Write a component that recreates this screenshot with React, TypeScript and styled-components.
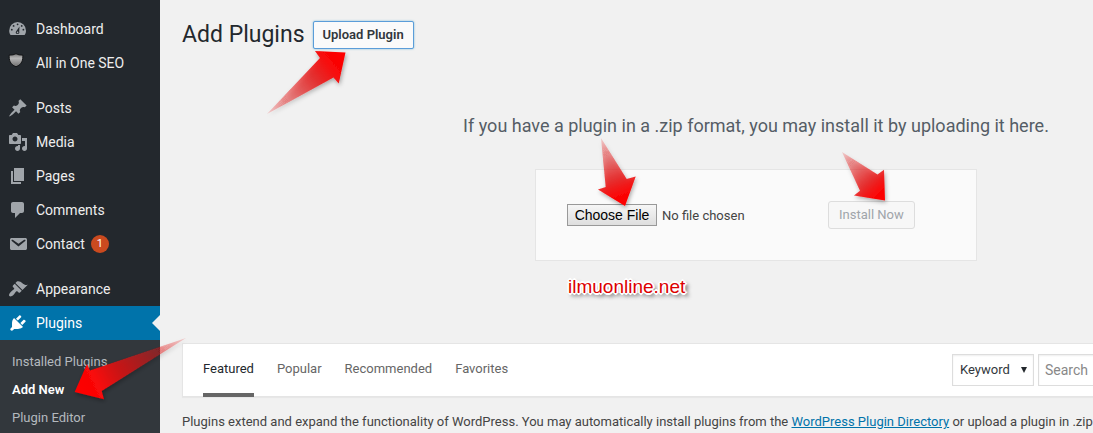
import React from "react";
import styled, { createGlobalStyle, css } from "styled-components";

const uiFont = `"Segoe UI", Roboto, "Open Sans", sans-serif`;

const GlobalStyle = createGlobalStyle`
  *, *::before, *::after { box-sizing: border-box; }
  body {
    margin: 0;
    background: #f1f1f1;
    color: #444;
    font-family: ${uiFont};
    font-size: 13px;
    line-height: 18px;
  }
  button, input, select { font: inherit; }
`;

const Page = styled.div`
  position: relative;
  display: flex;
  min-height: 100vh;
  overflow: hidden;
`;

/* ---------- Admin menu ---------- */

const Sidebar = styled.nav`
  display: flex;
  flex-direction: column;
  flex: 0 0 160px;
  padding-top: 12px;
  background: #23282d;
`;

const MenuList = styled.ul`
  margin: 0 0 11px;
  padding: 0;
  list-style: none;

  &:last-of-type {
    display: flex;
    flex-direction: column;
    flex: 1;
    margin: 0;
  }
`;

const MenuLink = styled.a<{ $current?: boolean }>`
  position: relative;
  display: flex;
  align-items: center;
  gap: 8px;
  height: 34px;
  padding-left: 8px;
  color: ${(p) => (p.$current ? "#fff" : "#eee")};
  background: ${(p) => (p.$current ? "#0073aa" : "transparent")};
  font-size: 14px;
  text-decoration: none;

  svg {
    flex: none;
    fill: ${(p) => (p.$current ? "#fff" : "#a0a5aa")};
  }

  ${(p) =>
    p.$current &&
    css`
      &::after {
        content: "";
        position: absolute;
        right: 0;
        top: 9px;
        border: 8px solid transparent;
        border-left-width: 0;
        border-right-color: #f1f1f1;
      }
    `}
`;

const Badge = styled.span`
  width: 18px;
  height: 18px;
  margin-left: -2px;
  border-radius: 9px;
  background: #ca4a1f;
  color: #fff;
  font-size: 11px;
  line-height: 18px;
  text-align: center;
`;

const Submenu = styled.ul`
  margin: 0;
  padding: 8px 0 0;
  list-style: none;
  background: #32373c;
`;

const SubmenuItem = styled.li`
  flex: 1;
  background: #32373c;
`;

const SubmenuLink = styled.a<{ $current?: boolean }>`
  display: block;
  padding: 5px 12px;
  color: ${(p) => (p.$current ? "#fff" : "#b4b9be")};
  font-size: 13px;
  font-weight: ${(p) => (p.$current ? 600 : 400)};
  text-decoration: none;
`;

const iconPaths = {
  dashboard:
    "M2.6 16C1.600 14.700 1.200 13.200 1.200 11.700A8.400 8.700 0 0 1 18 11.700C18 13.200 17.600 14.700 16.600 16zM9.600 4.400a.9.9 0 1 0 0 1.800.9.9 0 1 0 0-1.800zM5.600 6a.9.9 0 1 0 0 1.800.9.9 0 1 0 0-1.800zM13.700 6a.9.9 0 1 0 0 1.800.9.9 0 1 0 0-1.800zM3.800 9.800a.9.9 0 1 0 0 1.800.9.9 0 1 0 0-1.800zM15.400 9.800a.9.9 0 1 0 0 1.800.9.9 0 1 0 0-1.800zM11.500 7.600L8.400 11.900C7.200 12.900 7.600 15 9.500 15.100C11.300 15 11.700 13.500 11.200 12.500zM9.600 12.600a.8.8 0 1 1 0 1.600.8.8 0 1 1 0-1.600z",
  posts:
    "M10.44 3.02l1.82-1.82 6.36 6.35-1.83 1.82c-1.05-.68-2.48-.57-3.41.36l-.75.75c-.92.93-1.04 2.35-.35 3.41l-1.83 1.82-2.41-2.41-2.8 2.79c-.42.42-3.38 2.71-3.8 2.29s1.86-3.39 2.28-3.81l2.79-2.79L4.1 9.36l1.83-1.82c1.05.69 2.48.57 3.4-.36l.75-.75c.93-.92 1.05-2.35.36-3.41z",
  media:
    "M13 11V4c0-.55-.45-1-1-1h-1.67L9 1H5L3.67 3H2c-.55 0-1 .45-1 1v7c0 .55.45 1 1 1h10c.55 0 1-.45 1-1zM7 4.5c1.38 0 2.5 1.12 2.5 2.5S8.38 9.5 7 9.5 4.5 8.38 4.5 7 5.62 4.5 7 4.5zM14 6h5v10.5c0 1.38-1.12 2.5-2.5 2.5S14 17.88 14 16.5s1.12-2.5 2.5-2.5c.17 0 .34.02.5.05V9h-3V6zm-4 8.05V13h2v3.5c0 1.38-1.12 2.5-2.5 2.5S7 17.88 7 16.5 8.12 14 9.5 14c.17 0 .34.02.5.05z",
  pages: "M6 15V2h10v13H6zm-1 1h8v2H3V5h2v11z",
  comments:
    "M5 2h9c1.1 0 2 .9 2 2v7c0 1.1-.9 2-2 2h-2l-5 5v-5H5c-1.1 0-2-.9-2-2V4c0-1.1.9-2 2-2z",
  contact:
    "M3.87 4h13.25C18.37 4 19 4.59 19 5.79v8.42c0 1.19-.63 1.79-1.88 1.79H3.87c-1.25 0-1.88-.6-1.88-1.79V5.79c0-1.2.63-1.79 1.88-1.79zm6.62 8.6l6.74-5.53c.24-.2.43-.66.13-1.07-.29-.41-.82-.42-1.17-.17l-5.7 3.86L4.8 5.83c-.35-.25-.88-.24-1.17.17-.3.41-.11.87.13 1.07z",
  appearance:
    "M14.48 11.06L7.41 3.99l1.5-1.5c.5-.56 2.3-.47 3.51.32 1.21.8 1.43 1.28 2.91 2.1 1.18.64 2.45 1.26 4.45.85zm-.71.71L6.7 4.7 4.93 6.47c-.39.39-.39 1.02 0 1.41l1.06 1.06c.39.39.39 1.03 0 1.42-.6.6-1.43 1.11-2.21 1.69-.35.26-.7.53-1.01.84C1.43 14.23.4 16.08 1.4 17.07c.99 1 2.84-.03 4.18-1.36.31-.31.58-.66.85-1.02.57-.78 1.08-1.61 1.69-2.21.39-.39 1.02-.39 1.41 0l1.06 1.06c.39.39 1.02.39 1.41 0z",
  plugins:
    "M13.11 4.36L9.87 7.6 8 5.73l3.24-3.24c.35-.34 1.05-.2 1.56.32.52.51.66 1.21.31 1.55zm-8 1.77l.91-1.12 9.01 9.01-1.19.84c-.71.71-2.63 1.16-3.82 1.16H6.14L4.9 17.26c-.59.59-1.54.59-2.12 0-.59-.58-.59-1.53 0-2.12l1.24-1.24v-3.88c0-1.13.4-3.19 1.09-3.89zm7.26 3.97l3.24-3.24c.34-.35 1.04-.21 1.55.31.52.51.66 1.21.31 1.55l-3.24 3.25z",
};

type IconName = keyof typeof iconPaths;

const MenuIcon = ({ name }: { name: IconName }) => (
  <svg width="20" height="20" viewBox="0 0 20 20" aria-hidden="true">
    <path fillRule="evenodd" d={iconPaths[name]} />
  </svg>
);

const ShieldIcon = () => (
  <svg width="20" height="20" viewBox="0 0 20 20" aria-hidden="true">
    <defs>
      <linearGradient id="shield" x1="0" y1="0" x2="0" y2="1">
        <stop offset="0" stopColor="#777" />
        <stop offset="0.35" stopColor="#b4b4b4" />
        <stop offset="1" stopColor="#6e6e6e" />
      </linearGradient>
    </defs>
    <path
      d="M8 .7C9.8 1.8 12 2.1 14.8 2c.3 4.8-.6 9.3-6.8 11.8C1.8 11.3.9 6.8 1.2 2 4 2.1 6.2 1.800 8 .7z"
      fill="url(#shield)"
      stroke="#121416"
      strokeWidth="1"
    />
  </svg>
);

/* ---------- Main column ---------- */

const Main = styled.main`
  flex: 1;
  min-width: 0;
  padding: 21px 0 0 22px;
`;

const Wrap = styled.div`
  min-width: 1148px;
`;

const TitleRow = styled.header`
  display: flex;
  align-items: center;
  gap: 8px;
  height: 28px;
`;

const Title = styled.h1`
  margin: 0;
  font-size: 23px;
  font-weight: 400;
  line-height: 28px;
  color: #23282d;
`;

const Button = styled.button`
  padding: 0 10px;
  height: 28px;
  border: 1px solid #ddd;
  border-radius: 3px;
  background: #f7f7f7;
  font-size: 13px;
  line-height: 16px;

  &:disabled {
    color: #a0a5aa;
  }
`;

const UploadButton = styled(Button)`
  padding: 0 9px;
  border-color: #5b9dd9;
  border-radius: 2px;
  background: #fafafa;
  box-shadow: 0 0 2px rgba(30, 140, 190, 0.6);
  color: #32373c;
  font-weight: 600;
`;

const UploadSection = styled.section`
  display: flex;
  flex-direction: column;
  align-items: center;
  padding: 63px 0 82px;
`;

const Help = styled.p`
  margin: 0;
  color: #555d66;
  font-size: 18px;
  line-height: 27px;
`;

const UploadForm = styled.form`
  display: flex;
  align-items: center;
  width: 442px;
  height: 92px;
  margin-top: 30px;
  padding: 0 31px;
  border: 1px solid #e5e5e5;
  background: #fafafa;
`;

const FileInput = styled.input`
  width: 261px;
  color: #444;
  font-size: 13px;

  &::file-selector-button {
    width: 90px;
    height: 22px;
    margin: 0 5px 0 0;
    padding: 0;
    border: 1px solid #999;
    border-radius: 0;
    background: linear-gradient(#f6f6f6, #dedede);
    color: #000;
    font: 14px "Liberation Sans", Arial, sans-serif;
  }
`;

const FilterBar = styled.div`
  display: flex;
  justify-content: space-between;
  align-items: stretch;
  height: 54px;
  padding: 0 10px 0 20px;
  border: 1px solid #e5e5e5;
  background: #fff;
  box-shadow: 0 1px 1px rgba(0, 0, 0, 0.04);
`;

const Tabs = styled.ul`
  display: flex;
  gap: 23px;
  margin: 0;
  padding: 0;
  list-style: none;
`;

const Tab = styled.a<{ $current?: boolean }>`
  display: block;
  height: 53px;
  padding-top: 16px;
  border-bottom: 4px solid ${(p) => (p.$current ? "#666" : "transparent")};
  color: ${(p) => (p.$current ? "#23282d" : "#666")};
  font-size: 13px;
  text-decoration: none;
`;

const SearchForm = styled.form`
  display: flex;
  align-items: center;
  gap: 4px;
`;

const SelectBox = styled.span`
  position: relative;
  display: flex;

  svg {
    position: absolute;
    right: 6px;
    top: 12px;
    pointer-events: none;
  }
`;

const Select = styled.select`
  appearance: none;
  width: 82px;
  height: 32px;
  padding: 0 7px;
  border: 1px solid #ddd;
  border-radius: 0;
  background: #fff;
  box-shadow: inset 0 1px 2px rgba(0, 0, 0, 0.07);
  color: #32373c;
`;

const SearchInput = styled.input`
  width: 281px;
  height: 32px;
  padding: 0 6px;
  border: 1px solid #ddd;
  background: #fff;
  box-shadow: inset 0 1px 2px rgba(0, 0, 0, 0.07);
  font-size: 14px;

  &::placeholder {
    color: #888;
  }
`;

const Intro = styled.p`
  margin: 16px 0 0;
  font-size: 13px;
  white-space: nowrap;

  a {
    color: #0073aa;
  }
`;

/* ---------- Tutorial annotations ---------- */

const Annotation = styled.svg`
  position: absolute;
  top: 0;
  left: 0;
  overflow: visible;
  pointer-events: none;
`;

const Watermark = styled.span`
  position: absolute;
  top: 276px;
  left: 568px;
  color: #dc0000;
  font: 19px/22px "Liberation Sans", Arial, sans-serif;
  text-shadow:
    2px 0 #fff,
    -2px 0 #fff,
    0 2px #fff,
    0 -2px #fff,
    1px 1px #fff,
    -1px -1px #fff,
    -1px 1px #fff,
    1px -1px #fff,
    3px 3px 4px rgba(0, 0, 0, 0.9);
`;

const arrows = [
  { id: "to-upload", tail: [267, 114], tip: [345, 52], points: "267,114 320,58 315,51 345.5,52.5 338.7,83.5 333.5,77.5" },
  { id: "to-file", tail: [601, 138], tip: [625, 206], points: "601,138 605.7,187 598,189.5 625,206 635.7,176.5 626.7,179" },
  { id: "to-install", tail: [842, 152], tip: [885, 201], points: "842,152 860,190.7 854,195.5 885,200.5 884,169.7 877.5,174.5" },
  { id: "to-add-new", tail: [186, 338], tip: [75, 392], points: "186,338 90,370.5 87,364 74.7,392 104,399.3 101.7,391" },
];

const Arrows = () => (
  <Annotation width="1" height="1" aria-hidden="true">
    <defs>
      <filter id="arrow-shadow" x="-20%" y="-20%" width="150%" height="150%">
        <feDropShadow dx="1" dy="2" stdDeviation="2" floodOpacity="0.35" />
      </filter>
      {arrows.map(({ id, tail, tip }) => (
        <linearGradient
          key={id}
          id={id}
          gradientUnits="userSpaceOnUse"
          x1={tail[0]}
          y1={tail[1]}
          x2={tip[0]}
          y2={tip[1]}
        >
          <stop offset="0" stopColor="#e81010" stopOpacity="0.15" />
          <stop offset="0.6" stopColor="#e81010" stopOpacity="0.8" />
          <stop offset="0.8" stopColor="#f80808" />
          <stop offset="1" stopColor="#ff0000" />
        </linearGradient>
      ))}
    </defs>
    {arrows.map(({ id, points }) => (
      <polygon key={id} points={points} fill={`url(#${id})`} filter="url(#arrow-shadow)" />
    ))}
  </Annotation>
);

const contentMenu: { icon: IconName; label: string; count?: number }[] = [
  { icon: "posts", label: "Posts" },
  { icon: "media", label: "Media" },
  { icon: "pages", label: "Pages" },
  { icon: "comments", label: "Comments" },
  { icon: "contact", label: "Contact", count: 1 },
];

export default function App() {
  return (
    <Page>
      <GlobalStyle />
      <Sidebar aria-label="Admin menu">
        <MenuList>
          <li>
            <MenuLink href="#dashboard">
              <MenuIcon name="dashboard" />
              Dashboard
            </MenuLink>
          </li>
          <li>
            <MenuLink href="#seo">
              <ShieldIcon />
              All in One SEO
            </MenuLink>
          </li>
        </MenuList>
        <MenuList>
          {contentMenu.map((item) => (
            <li key={item.label}>
              <MenuLink href={`#${item.icon}`}>
                <MenuIcon name={item.icon} />
                {item.label}
                {item.count && <Badge>{item.count}</Badge>}
              </MenuLink>
            </li>
          ))}
        </MenuList>
        <MenuList>
          <li>
            <MenuLink href="#appearance">
              <MenuIcon name="appearance" />
              Appearance
            </MenuLink>
          </li>
          <SubmenuItem>
            <MenuLink href="#plugins" $current>
              <MenuIcon name="plugins" />
              Plugins
            </MenuLink>
            <Submenu>
              <li>
                <SubmenuLink href="#installed">Installed Plugins</SubmenuLink>
              </li>
              <li>
                <SubmenuLink href="#add-new" $current>
                  Add New
                </SubmenuLink>
              </li>
              <li>
                <SubmenuLink href="#editor">Plugin Editor</SubmenuLink>
              </li>
            </Submenu>
          </SubmenuItem>
        </MenuList>
      </Sidebar>

      <Main>
        <Wrap>
          <TitleRow>
            <Title>Add Plugins</Title>
            <UploadButton type="button">Upload Plugin</UploadButton>
          </TitleRow>

          <UploadSection>
            <Help>If you have a plugin in a .zip format, you may install it by uploading it here.</Help>
            <UploadForm>
              <FileInput type="file" aria-label="Plugin zip file" />
              <Button type="submit" disabled>
                Install Now
              </Button>
            </UploadForm>
          </UploadSection>

          <FilterBar>
            <Tabs>
              <li>
                <Tab href="#featured" $current>
                  Featured
                </Tab>
              </li>
              <li>
                <Tab href="#popular">Popular</Tab>
              </li>
              <li>
                <Tab href="#recommended">Recommended</Tab>
              </li>
              <li>
                <Tab href="#favorites">Favorites</Tab>
              </li>
            </Tabs>
            <SearchForm role="search">
              <SelectBox>
                <Select aria-label="Search by" defaultValue="Keyword">
                  <option>Keyword</option>
                </Select>
                <svg width="8" height="8" viewBox="0 0 8 8" aria-hidden="true">
                  <path d="M1 1h6L4 7z" fill="#23282d" />
                </svg>
              </SelectBox>
              <SearchInput type="search" aria-label="Search plugins" placeholder="Search" />
            </SearchForm>
          </FilterBar>

          <Intro>
            Plugins extend and expand the functionality of WordPress. You may automatically install plugins from the{" "}
            <a href="#directory">WordPress Plugin Directory</a> or upload a plugin in .zip
          </Intro>
        </Wrap>
      </Main>

      <Arrows />
      <Watermark>ilmuonline.net</Watermark>
    </Page>
  );
}
